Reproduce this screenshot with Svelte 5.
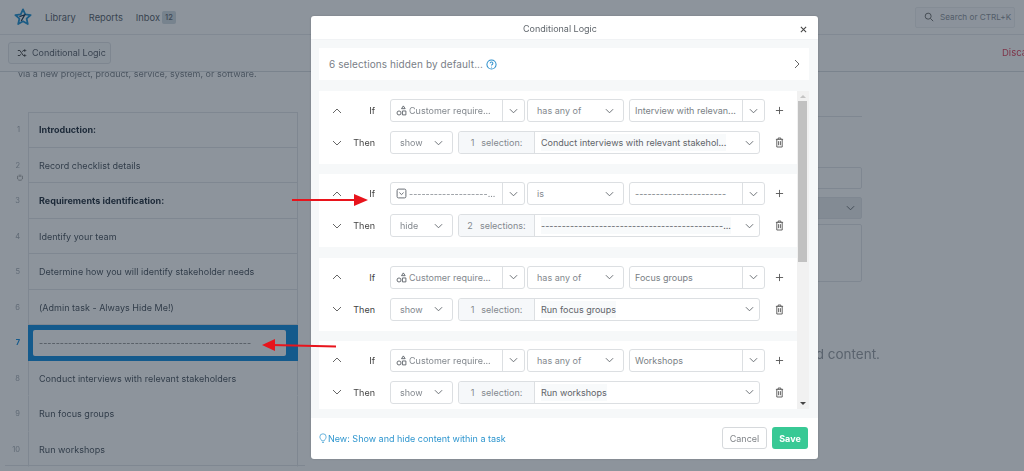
<script>
  const steps = [
    { n: 1, t: 'Introduction:', bold: true },
    { n: 2, t: 'Record checklist details', grab: true },
    { n: 3, t: 'Requirements identification:', bold: true },
    { n: 4, t: 'Identify your team' },
    { n: 5, t: 'Determine how you will identify stakeholder needs' },
    { n: 6, t: '(Admin task - Always Hide Me!)' },
    { n: 7, t: '---------------------------------------------------', active: true },
    { n: 8, t: 'Conduct interviews with relevant stakeholders' },
    { n: 9, t: 'Run focus groups' },
    { n: 10, t: 'Run workshops' }
  ];
  const rules = [
    { icon: 'shapes', field: 'Customer require...', op: 'has any of', val: 'Interview with relevan...', act: 'show', count: '1', target: 'Conduct interviews with relevant stakehol...' },
    { icon: 'check', field: '-------------------...', op: 'is', val: '----------------------', act: 'hide', count: '2', target: '--------------------------------------------...' },
    { icon: 'shapes', field: 'Customer require...', op: 'has any of', val: 'Focus groups', act: 'show', count: '1', target: 'Run focus groups' },
    { icon: 'shapes', field: 'Customer require...', op: 'has any of', val: 'Workshops', act: 'show', count: '1', target: 'Run workshops' }
  ];
</script>

{#snippet chev(cls = '')}
  <svg class="chev {cls}" viewBox="0 0 10 6" aria-hidden="true"><path d="M1 1l4 4 4-4" /></svg>
{/snippet}

<div class="screen">
  <div class="page">
    <header class="nav">
      <svg class="logo" viewBox="0 0 20 20" aria-hidden="true">
        <path d="M10 1.500l2.500 5.600 6 .7-4.500 4 1.300 6L10 14.800l-5.300 3 1.300-6-4.500-4 6-.7z" fill="none" stroke="#1c8fd0" stroke-width="2" stroke-linejoin="round" />
        <path d="M6 9.500l6-2-4 7" fill="none" stroke="#16324f" stroke-width="1.400" />
      </svg>
      <span class="navlink">Library</span>
      <span class="navlink">Reports</span>
      <span class="navlink inbox">Inbox</span>
      <span class="badge">12</span>
      <div class="search">
        <svg viewBox="0 0 12 12" aria-hidden="true"><circle cx="5" cy="5" r="3.600" /><path d="M7.800 7.800L11 11" /></svg>
        <span>Search or CTRL+K</span>
      </div>
    </header>
    <div class="toolbar">
      <div class="logicbtn">
        <svg viewBox="0 0 12 12" aria-hidden="true"><path d="M1 3h2.500l4 6H10M1 9h2.500l1-1.500M6.500 4.500l1-1.500H10M9 1.500L10.500 3 9 4.500M9 7.500l1.500 1.500L9 10.500" /></svg>
        Conditional Logic
      </div>
      <span class="discard">Discard</span>
    </div>
    <main class="content">
      <section class="left">
        <p class="intro">via a new project, product, service, system, or software.</p>
        <ol class="steps">
          {#each steps as s}
            <li class="step" class:active={s.active}>
              <span class="num">{s.n}</span>
              {#if s.grab}
                <svg class="grab" viewBox="0 0 10 10" aria-hidden="true"><path d="M2 5V3.500M4 5V2M6 5V2M8 5V3.500M2 5v2.500L3.500 9h3L8 7.500V5" /></svg>
              {/if}
              <div class="cell">
                <span class="label" class:bold={s.bold}>{s.t}</span>
              </div>
            </li>
          {/each}
        </ol>
      </section>
      <section class="right">
        <div class="rule"></div>
        <div class="field"></div>
        <div class="field sel">{@render chev()}</div>
        <div class="area"></div>
        <p class="empty">This task has no added content.</p>
      </section>
    </main>
    <div class="endline"></div>
  </div>

  <div class="backdrop"></div>

  <div class="modal">
    <div class="mhead">
      <span>Conditional Logic</span>
      <svg class="close" viewBox="0 0 8 8" aria-hidden="true"><path d="M1 1l6 6M7 1L1 7" /></svg>
    </div>
    <div class="mbody">
      <div class="hidden-note">
        <span>6 selections hidden by default...</span>
        <svg class="help" viewBox="0 0 12 12" aria-hidden="true">
          <circle cx="6" cy="6" r="5" />
          <path d="M4.500 4.700a1.500 1.500 0 1 1 2.300 1.300c-.6.400-.8.600-.8 1.200M6 8.500v.8" />
        </svg>
        <svg class="next" viewBox="0 0 6 10" aria-hidden="true"><path d="M1 1l4 4-4 4" /></svg>
      </div>
      <div class="scroller">
        <div class="rules">
          {#each rules as r}
            <div class="card">
              <div class="row">
                <svg class="mover" viewBox="0 0 10 6" aria-hidden="true"><path d="M1 5l4-4 4 4" /></svg>
                <span class="kw if">If</span>
                <div class="ctl fieldsel">
                  <span class="txt">
                    {#if r.icon === 'shapes'}
                      <svg class="ico" viewBox="0 0 12 12" aria-hidden="true"><path d="M8 1l2 3H6zM7 6.500h3.800v4.300H7z" /><circle cx="3.300" cy="8.700" r="2.200" /></svg>
                    {:else}
                      <svg class="ico" viewBox="0 0 12 12" aria-hidden="true"><rect x="1.200" y="1.200" width="9.600" height="9.600" rx="1.500" /><path d="M3.700 5l2.300 2.200L8.300 5" /></svg>
                    {/if}
                    {r.field}
                  </span>
                  <span class="split">{@render chev()}</span>
                </div>
                <div class="ctl opsel"><span class="txt">{r.op}</span>{@render chev()}</div>
                <div class="ctl valsel"><span class="txt">{r.val}</span><span class="split">{@render chev()}</span></div>
                <svg class="tool" viewBox="0 0 10 10" aria-hidden="true"><path d="M5 1v8M1 5h8" /></svg>
              </div>
              <div class="row">
                <svg class="mover" viewBox="0 0 10 6" aria-hidden="true"><path d="M1 1l4 4 4-4" /></svg>
                <span class="kw">Then</span>
                <div class="ctl actsel"><span class="txt">{r.act}</span>{@render chev()}</div>
                <div class="ctl targets">
                  <span class="count">{r.count}&nbsp; selection{r.count === '1' ? '' : 's'}:</span>
                  <span class="target"><span class="txt dark">{r.target}</span>{@render chev()}</span>
                </div>
                <svg class="tool trash" viewBox="0 0 10 12" aria-hidden="true"><path d="M1 2.500h8M3.500 2.500V1h3v1.500M2 2.500v8.500h6V2.500M4 4.500V9M6 4.500V9" /></svg>
              </div>
            </div>
          {/each}
        </div>
        <div class="scrollbar">
          <span class="sb-up"></span>
          <span class="thumb"></span>
          <span class="sb-down"></span>
        </div>
      </div>
    </div>
    <div class="mfoot">
      <a class="newlink" href="#top">
        <svg viewBox="0 0 10 14" aria-hidden="true"><path d="M3.500 10C3.300 8.500 1 7.500 1 5a4 4 0 0 1 8 0c0 2.500-2.300 3.500-2.500 5zM3.700 12h2.600" /></svg>
        New: Show and hide content within a task
      </a>
      <button class="cancel">Cancel</button>
      <button class="save">Save</button>
    </div>
  </div>

  <svg class="arrow a1" viewBox="0 0 76 14" aria-hidden="true"><path d="M0 7h64" /><path class="head" d="M76 7L62 1v12z" /></svg>
  <svg class="arrow a2" viewBox="0 0 74 14" aria-hidden="true"><path d="M74 8.500L10 7" /><path class="head" d="M0 7l13-6v12z" /></svg>
</div>

<style>
  :global(body) { margin: 0; background: #fff; }
  * { box-sizing: border-box; }
  .screen {
    position: relative;
    width: 1024px;
    height: 471px;
    overflow: hidden;
    font-family: Inter, "Noto Sans", sans-serif;
    font-size: 9px;
    color: #4a4f55;
  }
  .page { height: 471px; background: #fff; filter: blur(0.55px); display: flex; flex-direction: column; }
  .backdrop { position: absolute; inset: 0; background: rgba(27, 41, 57, 0.5); }

  .nav { height: 35px; flex: none; display: flex; align-items: center; padding: 0 9px 0 14px; border-bottom: 1px solid #e6e9ec; }
  .logo { width: 18px; height: 18px; margin-right: 13px; }
  .navlink { font-size: 9.300px; color: #555c66; margin-right: 13px; }
  .inbox { margin-right: 2px; }
  .badge { background: #d3dce2; border-radius: 2px; font-size: 7.500px; font-weight: 500; width: 14px; height: 13px; display: flex; align-items: center; justify-content: center; color: #5c6670; }
  .search { margin-left: auto; width: 100px; height: 21px; border: 1px solid #eceef0; border-radius: 2px; display: flex; align-items: center; gap: 6px; padding-left: 8px; color: #8a9098; font-size: 8.200px; white-space: nowrap; background: #fbfbfc; }
  .search svg { width: 10px; height: 10px; fill: none; stroke: #555; stroke-width: 1; flex: none; }

  .toolbar { height: 37px; flex: none; display: flex; align-items: center; padding: 0 0 1px 8px; border-bottom: 1px solid #d8dce0; }
  .logicbtn { width: 103px; height: 22px; border: 1px solid #e0e3e7; border-radius: 3px; display: flex; align-items: center; gap: 5px; padding-left: 8px; font-size: 9px; color: #555c66; background: #f9fafa; white-space: nowrap; }
  .logicbtn svg { width: 10px; height: 10px; fill: none; stroke: #333; stroke-width: 1.100; flex: none; }
  .discard { margin-left: auto; margin-right: -16px; color: #e0405a; font-size: 9.500px; width: 38px; white-space: nowrap; }

  .content { flex: 1; display: flex; overflow: hidden; min-height: 0; }
  .left { width: 298px; flex: none; }
  .intro { margin: -4px 0 32px 18px; font-size: 9px; line-height: 12px; height: 12px; color: #7b8188; white-space: nowrap; }
  .steps { list-style: none; margin: 0; padding: 0; }
  .step { position: relative; height: 35.500px; display: flex; }
  .num { width: 28px; flex: none; padding-right: 8px; text-align: right; font-size: 7.500px; color: #a5abb2; line-height: 35px; }
  .grab { position: absolute; left: 16px; top: 25px; width: 8px; height: 8px; fill: none; stroke: #777; stroke-width: .8; }
  .cell { flex: 1; border-left: 1px solid #e2e5e8; border-right: 1px solid #e2e5e8; border-bottom: 1px solid #e2e5e8; padding: 1px 0 0 10px; display: flex; align-items: center; min-width: 0; }
  .step:first-child .cell { border-top: 1px solid #e2e5e8; padding-top: 0; }
  .step:nth-child(n+8) .cell { border-bottom-color: transparent; }
  .label { font-size: 9px; color: #47505a; white-space: nowrap; letter-spacing: .02px; }
  .bold { font-weight: 700; color: #1c2836; }
  .active .num { color: #0d8bdf; font-weight: 700; }
  .active .cell { background: #0d8bdf; border: 0; padding: 5px 12px 5px 5px; align-items: stretch; }
  .active .label { flex: 1; background: #fff; border-radius: 2px; padding-left: 6px; display: flex; align-items: center; overflow: hidden; color: #777; }

  .right { flex: 1; padding: 44px 162px 0 40px; display: flex; flex-direction: column; }
  .rule { height: 1px; background: #e2e5e8; margin-bottom: 50px; }
  .field { height: 22px; border: 1px solid #e2e5e8; border-radius: 2px; margin-bottom: 8px; flex: none; }
  .field.sel { background: #ebedef; margin-bottom: 5px; display: flex; align-items: center; justify-content: flex-end; padding-right: 6px; }
  .area { height: 58px; flex: none; border: 1px solid #e2e5e8; border-radius: 2px; }
  .empty { margin: 64px -18px 0 0; text-align: right; font-size: 13.500px; color: #999da2; white-space: nowrap; }
  .endline { position: absolute; left: 5px; top: 465px; width: 300px; height: 1px; background: #e2e5e8; }

  .modal { position: absolute; left: 311px; top: 16px; width: 507px; height: 443px; background: #fff; border-radius: 3px; display: flex; flex-direction: column; overflow: hidden; box-shadow: 0 0 2px rgba(0,0,0,.2); }
  .mhead { height: 24px; flex: none; display: flex; align-items: center; justify-content: center; position: relative; padding: 2px 9px 0 0; font-size: 9px; color: #5f656b; border-bottom: 1px solid #f1f3f5; }
  .close { position: absolute; right: 11px; top: 10px; width: 7px; height: 7px; fill: none; stroke: #444; stroke-width: 1.200; }
  .mbody { flex: 1; min-height: 0; background: #f6f8f9; padding: 8px 9px 9px 8px; display: flex; flex-direction: column; gap: 11px; }
  .hidden-note { height: 32px; flex: none; background: #fff; display: flex; align-items: center; padding: 0 9px 0 10px; color: #7a8087; font-size: 10px; letter-spacing: .1px; }
  .help { width: 11px; height: 11px; margin-left: 3px; fill: none; stroke: #2b8ecb; stroke-width: 1.100; }
  .next { width: 6px; height: 10px; margin-left: auto; fill: none; stroke: #666; stroke-width: 1; }

  .scroller { flex: 1; min-height: 0; display: flex; }
  .rules { flex: 1; min-width: 0; overflow: hidden; display: flex; flex-direction: column; gap: 10.300px; }
  .card { flex: none; height: 73px; background: #fff; padding: 8px 0 0 0; display: flex; flex-direction: column; gap: 9px; }
  .row { height: 23px; display: flex; align-items: center; }
  .mover { width: 10px; height: 6px; flex: none; margin-left: 13px; fill: none; stroke: #666; stroke-width: 1; }
  .kw { width: 33px; flex: none; text-align: right; font-size: 9px; color: #444; }
  .ctl { height: 23px; flex: none; display: flex; align-items: center; justify-content: space-between; border: 1px solid #dcdfe2; border-radius: 3px; background: #fff; padding-left: 9px; color: #83888e; font-size: 9px; white-space: nowrap; }
  .txt { display: flex; align-items: center; gap: 2px; min-width: 0; }
  .dark { color: #5f6469; background: #f8fafb; padding: 3px 0; }
  .chev { width: 9px; height: 6px; flex: none; fill: none; stroke: #5d6369; stroke-width: 1; }
  .ico { width: 11px; height: 11px; flex: none; fill: none; stroke: #5d6369; stroke-width: 1; }
  .split { width: 22px; height: 100%; flex: none; border-left: 1px solid #dcdfe2; display: flex; align-items: center; justify-content: center; }
  .fieldsel { width: 135px; margin-left: 15px; padding-left: 5px; }
  .opsel { width: 97px; margin-left: 2px; padding-right: 9px; }
  .valsel { width: 136px; margin-left: 5px; padding-left: 5px; }
  .valsel .txt { color: #7a7f85; }
  .tool { width: 9px; height: 9px; flex: none; margin-left: 10px; fill: none; stroke: #555; stroke-width: 1; }
  .actsel { width: 63px; margin-left: 15px; padding-right: 9px; }
  .targets { width: 302px; margin-left: 5px; padding: 0; }
  .count { width: 76px; height: 100%; flex: none; background: #f6f8fa; border-right: 1px solid #dcdfe2; border-radius: 3px 0 0 3px; display: flex; align-items: center; justify-content: center; word-spacing: 1px; }
  .target { flex: 1; min-width: 0; display: flex; align-items: center; justify-content: space-between; padding: 0 5px 0 6px; }
  .trash { width: 9px; height: 11px; margin-left: 15px; }

  .scrollbar { width: 12px; flex: none; background: #f1f1f1; position: relative; display: flex; flex-direction: column; align-items: center; }
  .thumb { width: 9px; height: 161px; background: #c1c1c1; margin: 3px 0 0 -2px; }
  .sb-up { margin-top: 4px; width: 0; height: 0; border: 3px solid transparent; border-top: 0; border-bottom: 3px solid #c4c4c4; }
  .sb-down { position: absolute; bottom: 4px; width: 0; height: 0; border: 3px solid transparent; border-bottom: 0; border-top: 3px solid #444; }

  .mfoot { height: 41px; flex: none; display: flex; align-items: center; padding: 0 10px 1px 8px; gap: 5px; }
  .newlink { display: flex; align-items: center; gap: 1px; margin-right: auto; color: #2f96cf; font-size: 9px; text-decoration: none; }
  .newlink svg { width: 8px; height: 11px; fill: none; stroke: #2f96cf; stroke-width: .9; }
  button { height: 22px; border-radius: 3px; font: inherit; font-size: 9px; padding: 0; }
  .cancel { width: 45px; background: #fff; border: 1px solid #d6d9dc; color: #808488; }
  .save { width: 36px; background: #38c995; border: 0; color: #fff; font-weight: 700; }

  .arrow { position: absolute; fill: none; stroke: #e8141c; stroke-width: 2; }
  .head { fill: #e8141c; stroke: none; }
  .a1 { left: 292px; top: 193px; width: 76px; height: 14px; }
  .a2 { left: 262px; top: 338px; width: 74px; height: 14px; }
</style>
